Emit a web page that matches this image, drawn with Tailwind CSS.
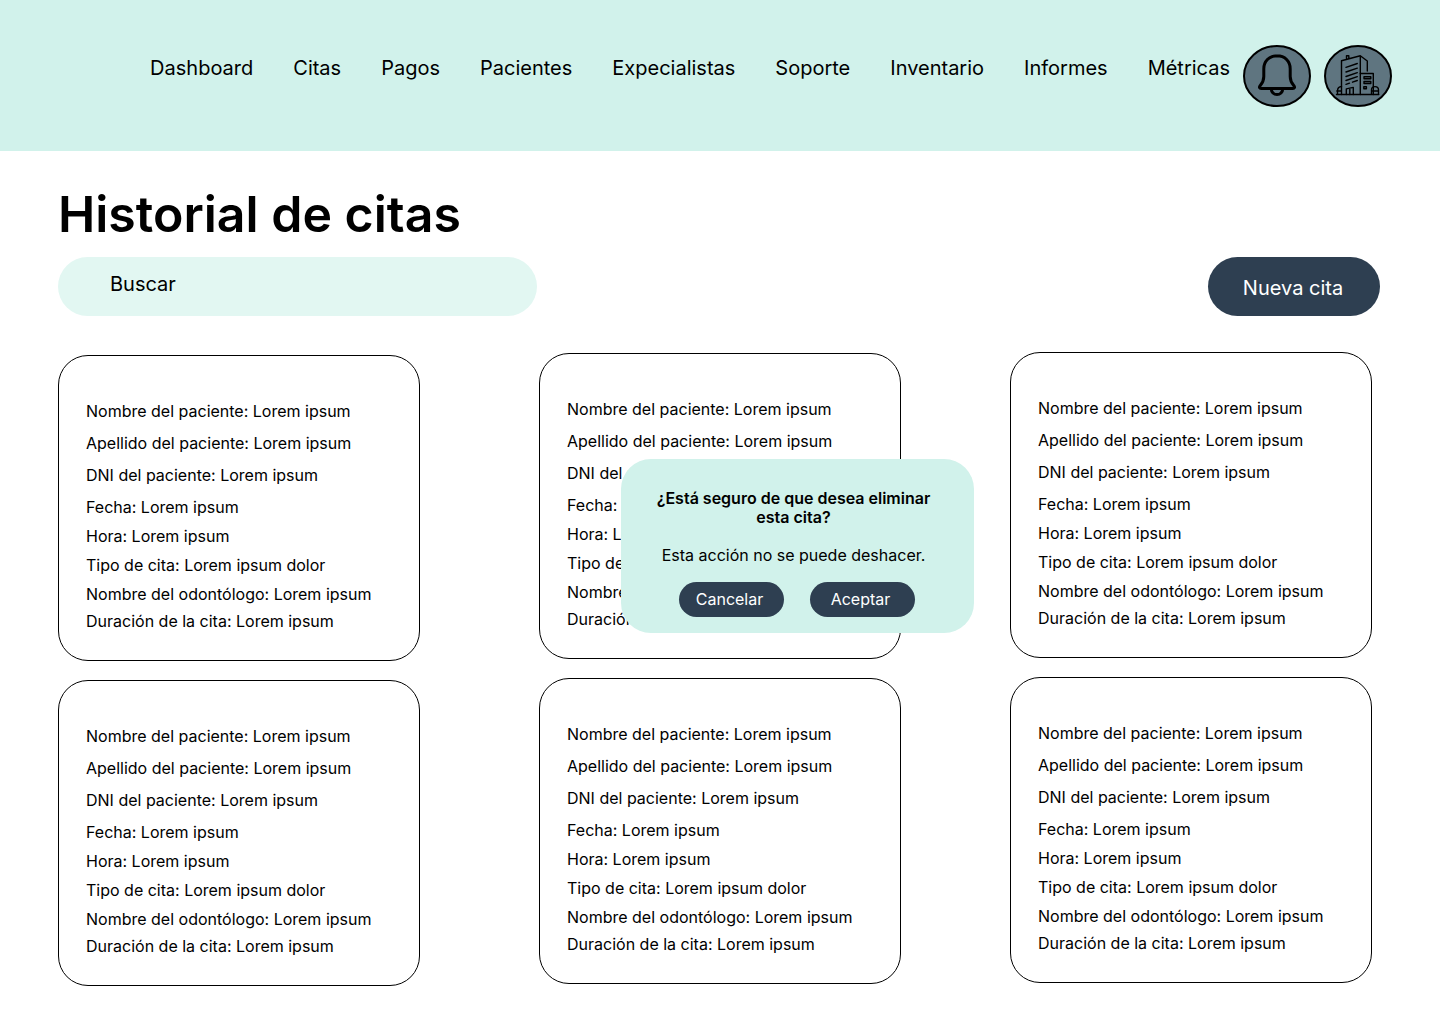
<!DOCTYPE html>
<html lang="es">
<head>
<meta charset="utf-8">
<meta name="viewport" content="width=device-width, initial-scale=1">
<title>Historial de citas</title>
<script src="https://cdn.jsdelivr.net/npm/@tailwindcss/browser@4"></script>
</head>
<body class="min-h-screen bg-white font-['Inter',sans-serif] text-base text-black">
<header class="flex h-[151px] items-center justify-end gap-[13px] bg-[#d1f2eb] pr-12">
  <nav class="flex gap-10 pb-4 text-xl leading-6" aria-label="Principal">
    <a href="#">Dashboard</a>
    <a href="#">Citas</a>
    <a href="#">Pagos</a>
    <a href="#">Pacientes</a>
    <a href="#">Expecialistas</a>
    <a href="#">Soporte</a>
    <a href="#">Inventario</a>
    <a href="#">Informes</a>
    <a href="#">Métricas</a>
  </nav>
  <button type="button" aria-label="Notificaciones" class="shrink-0">
    <svg class="block h-[62px] w-[68px]" viewBox="0 0 68 62" fill="none" stroke="#000" stroke-linecap="round" stroke-linejoin="round">
      <ellipse cx="34" cy="31" rx="33" ry="30" fill="#5f7580" stroke-width="2"/>
      <path stroke-width="3" d="M34 10.8c-8 0-13.2 5.7-13.2 13v7.7c0 4.500-1.500 6.800-3.700 9.300-1.200 1.500-.6 2.700 1.100 2.700h31.600c1.700 0 2.300-1.200 1.100-2.700-2.200-2.500-3.700-4.800-3.700-9.300v-7.700c0-7.300-5.200-13-13.200-13z"/>
      <path stroke-width="3" stroke-linecap="butt" d="M28.300 44a5.700 5.600 0 0 0 11.400 0"/>
    </svg>
  </button>
  <button type="button" aria-label="Clínica" class="shrink-0">
    <svg class="block h-[62px] w-[68px]" viewBox="0 0 68 62" fill="none" stroke="#000" stroke-linecap="round" stroke-linejoin="round">
      <ellipse cx="34" cy="31" rx="33" ry="30" fill="#5f7580" stroke-width="2"/>
      <g stroke-width="1.4">
        <path d="M17.500 49.500V15.700l18.800-5v38.800M36.300 10.700l7 5.300v10M22.500 14.200v-3.500h2.300v3"/>
        <path d="M22 22.300L33.300 18.500M22 27L33.300 23.200M22 31.500L33.300 27.700M22 35.500L33.300 31.700M22 39.300L25.500 38.200M28.500 37.200L33.300 35.500"/>
        <path d="M22.300 49.500v-5.600l7-1.500v7.100M25.800 43.200v6.300"/>
        <path d="M36.300 28.500h13v21M40 31.700h6.800v2H40zM40 36.500h6.800v2H40zM39.800 41.700h2.600v2h-2.600z"/>
        <path d="M17.500 41.500c-3.200.3-4 2.500-4 4.500v3.500M12.800 46h4.500M47.500 49.500V45c0-4.500 7-4.500 7 0v4.500M47.500 46h7M12.500 49.500h42.300"/>
      </g>
    </svg>
  </button>
</header>

<main class="pr-[60px] pb-9 pl-[58px]">
  <h1 class="pt-[33px] text-[50px] leading-[61px] font-semibold">Historial de citas</h1>
  <div class="mt-3 flex items-center justify-between">
    <input type="search" aria-label="Buscar" placeholder="Buscar" class="h-[59px] w-full max-w-[479px] appearance-none rounded-full bg-[#e2f7f2] pr-8 pb-1.5 pl-[52px] text-xl placeholder:text-black placeholder:opacity-100">
    <button type="button" class="h-[59px] w-[172px] shrink-0 rounded-full bg-[#2e3f51] pt-0.5 pr-0.5 text-xl text-white">Nueva cita</button>
  </div>

  <div class="mt-9 mr-2 grid grid-cols-[481fr_471fr_362fr]">
    <section class="flex flex-col gap-[19px] pt-[3px]">
      <article class="h-[306px] w-full max-w-[362px] rounded-[30px] border border-black pt-[45px] pl-[27px] leading-5">
        <ul class="flex flex-col gap-3">
          <li>Nombre del paciente: Lorem ipsum</li>
          <li>Apellido del paciente: Lorem ipsum</li>
          <li>DNI del paciente: Lorem ipsum</li>
          <li>Fecha: Lorem ipsum</li>
        </ul>
        <ul class="flex flex-col gap-[9px] pt-[9px]">
          <li>Hora: Lorem ipsum</li>
          <li>Tipo de cita: Lorem ipsum dolor</li>
          <li>Nombre del odontólogo: Lorem ipsum</li>
        </ul>
        <p class="pt-[7px]">Duración de la cita: Lorem ipsum</p>
      </article>
      <article class="h-[306px] w-full max-w-[362px] rounded-[30px] border border-black pt-[45px] pl-[27px] leading-5">
        <ul class="flex flex-col gap-3">
          <li>Nombre del paciente: Lorem ipsum</li>
          <li>Apellido del paciente: Lorem ipsum</li>
          <li>DNI del paciente: Lorem ipsum</li>
          <li>Fecha: Lorem ipsum</li>
        </ul>
        <ul class="flex flex-col gap-[9px] pt-[9px]">
          <li>Hora: Lorem ipsum</li>
          <li>Tipo de cita: Lorem ipsum dolor</li>
          <li>Nombre del odontólogo: Lorem ipsum</li>
        </ul>
        <p class="pt-[7px]">Duración de la cita: Lorem ipsum</p>
      </article>
    </section>

    <section class="relative flex flex-col gap-[19px] pt-px">
      <article class="h-[306px] w-full max-w-[362px] rounded-[30px] border border-black pt-[45px] pl-[27px] leading-5">
        <ul class="flex flex-col gap-3">
          <li>Nombre del paciente: Lorem ipsum</li>
          <li>Apellido del paciente: Lorem ipsum</li>
          <li>DNI del paciente: Lorem ipsum</li>
          <li>Fecha: Lorem ipsum</li>
        </ul>
        <ul class="flex flex-col gap-[9px] pt-[9px]">
          <li>Hora: Lorem ipsum</li>
          <li>Tipo de cita: Lorem ipsum dolor</li>
          <li>Nombre del odontólogo: Lorem ipsum</li>
        </ul>
        <p class="pt-[7px]">Duración de la cita: Lorem ipsum</p>
      </article>
      <article class="h-[306px] w-full max-w-[362px] rounded-[30px] border border-black pt-[45px] pl-[27px] leading-5">
        <ul class="flex flex-col gap-3">
          <li>Nombre del paciente: Lorem ipsum</li>
          <li>Apellido del paciente: Lorem ipsum</li>
          <li>DNI del paciente: Lorem ipsum</li>
          <li>Fecha: Lorem ipsum</li>
        </ul>
        <ul class="flex flex-col gap-[9px] pt-[9px]">
          <li>Hora: Lorem ipsum</li>
          <li>Tipo de cita: Lorem ipsum dolor</li>
          <li>Nombre del odontólogo: Lorem ipsum</li>
        </ul>
        <p class="pt-[7px]">Duración de la cita: Lorem ipsum</p>
      </article>

      <div role="dialog" aria-labelledby="confirm-title" class="absolute top-[107px] left-[82px] z-10 flex w-[353px] flex-col items-center rounded-[30px] bg-[#d1f2eb] pt-[30px] pb-4 text-center leading-[19px]">
        <h2 id="confirm-title" class="w-[300px] pr-2 font-semibold">¿Está seguro de que desea eliminar esta cita?</h2>
        <p class="pt-[19px] pr-2">Esta acción no se puede deshacer.</p>
        <div class="flex gap-[26px] pt-[17px] pr-px">
          <button type="button" class="h-[35px] w-[105px] rounded-full bg-[#2e3f51] pr-1 text-white">Cancelar</button>
          <button type="button" class="h-[35px] w-[105px] rounded-full bg-[#2e3f51] pr-1 text-white">Aceptar</button>
        </div>
      </div>
    </section>

    <section class="flex flex-col gap-[19px]">
      <article class="h-[306px] w-full max-w-[362px] rounded-[30px] border border-black pt-[45px] pl-[27px] leading-5">
        <ul class="flex flex-col gap-3">
          <li>Nombre del paciente: Lorem ipsum</li>
          <li>Apellido del paciente: Lorem ipsum</li>
          <li>DNI del paciente: Lorem ipsum</li>
          <li>Fecha: Lorem ipsum</li>
        </ul>
        <ul class="flex flex-col gap-[9px] pt-[9px]">
          <li>Hora: Lorem ipsum</li>
          <li>Tipo de cita: Lorem ipsum dolor</li>
          <li>Nombre del odontólogo: Lorem ipsum</li>
        </ul>
        <p class="pt-[7px]">Duración de la cita: Lorem ipsum</p>
      </article>
      <article class="h-[306px] w-full max-w-[362px] rounded-[30px] border border-black pt-[45px] pl-[27px] leading-5">
        <ul class="flex flex-col gap-3">
          <li>Nombre del paciente: Lorem ipsum</li>
          <li>Apellido del paciente: Lorem ipsum</li>
          <li>DNI del paciente: Lorem ipsum</li>
          <li>Fecha: Lorem ipsum</li>
        </ul>
        <ul class="flex flex-col gap-[9px] pt-[9px]">
          <li>Hora: Lorem ipsum</li>
          <li>Tipo de cita: Lorem ipsum dolor</li>
          <li>Nombre del odontólogo: Lorem ipsum</li>
        </ul>
        <p class="pt-[7px]">Duración de la cita: Lorem ipsum</p>
      </article>
    </section>
  </div>
</main>
</body>
</html>
